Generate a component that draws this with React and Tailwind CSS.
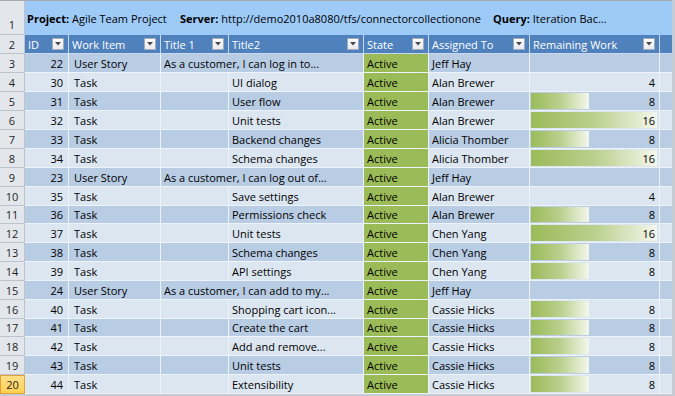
import React from "react";

const GRID =
  "grid grid-cols-[25px_44px_92px_68px_135px_65px_101px_130px_12px]";

const rows = [
  { n: 3, id: 22, type: "User Story", t1: "As a customer, I can log in to...", who: "Jeff Hay" },
  { n: 4, id: 30, type: "Task", t2: "UI dialog", who: "Alan Brewer", rw: 4 },
  { n: 5, id: 31, type: "Task", t2: "User flow", who: "Alan Brewer", rw: 8 },
  { n: 6, id: 32, type: "Task", t2: "Unit tests", who: "Alan Brewer", rw: 16 },
  { n: 7, id: 33, type: "Task", t2: "Backend changes", who: "Alicia Thomber", rw: 8 },
  { n: 8, id: 34, type: "Task", t2: "Schema changes", who: "Alicia Thomber", rw: 16 },
  { n: 9, id: 23, type: "User Story", t1: "As a customer, I can log out of...", who: "Jeff Hay" },
  { n: 10, id: 35, type: "Task", t2: "Save settings", who: "Alan Brewer", rw: 4 },
  { n: 11, id: 36, type: "Task", t2: "Permissions check", who: "Alan Brewer", rw: 8 },
  { n: 12, id: 37, type: "Task", t2: "Unit tests", who: "Chen Yang", rw: 16 },
  { n: 13, id: 38, type: "Task", t2: "Schema changes", who: "Chen Yang", rw: 8 },
  { n: 14, id: 39, type: "Task", t2: "API settings", who: "Chen Yang", rw: 8 },
  { n: 15, id: 24, type: "User Story", t1: "As a customer, I can add to my...", who: "Jeff Hay" },
  { n: 16, id: 40, type: "Task", t2: "Shopping cart icon...", who: "Cassie Hicks", rw: 8 },
  { n: 17, id: 41, type: "Task", t2: "Create the cart", who: "Cassie Hicks", rw: 8 },
  { n: 18, id: 42, type: "Task", t2: "Add and remove...", who: "Cassie Hicks", rw: 8 },
  { n: 19, id: 43, type: "Task", t2: "Unit tests", who: "Cassie Hicks", rw: 8 },
  { n: 20, id: 44, type: "Task", t2: "Extensibility", who: "Cassie Hicks", rw: 8 },
];

const barWidth = { 4: 0, 8: 58, 16: 126 };

function FilterBtn() {
  return (
    <div className="w-[12px] h-[12px] shrink-0 border border-[#a3acb7] bg-gradient-to-b from-white to-[#e6e9ee] flex items-center justify-center">
      <svg width="6" height="4" viewBox="0 0 6 4">
        <polygon points="0,0 6,0 3,3.5" fill="#4a4a4a" />
      </svg>
    </div>
  );
}

function HeadCell({ label }) {
  return (
    <div className="bg-[#4f81bd] text-white border-r border-b border-[#c9d8ec] flex items-center justify-between pl-[3px] pr-[4px] overflow-hidden whitespace-nowrap">
      <span>{label}</span>
      <FilterBtn />
    </div>
  );
}

function RowHead({ n, selected }) {
  if (selected) {
    return (
      <div className="border border-[#e2a13a] bg-gradient-to-b from-[#ffe189] to-[#ffd050] flex items-center justify-center text-[#1f1f1f]">
        {n}
      </div>
    );
  }
  return (
    <div className="bg-[#e3e6eb] border-r border-b border-[#bcc3cd] flex items-center justify-center text-[#1f1f1f]">
      {n}
    </div>
  );
}

function DataRow({ r, i }) {
  const band = i % 2 === 0 ? "bg-[#b8cce4]" : "bg-[#dce6f1]";
  const h = r.n === 11 || r.n === 17 ? "h-[18px]" : "h-[19px]";
  const cell = `${band} border-r border-b border-[#eef3f9] flex items-center overflow-hidden whitespace-nowrap`;
  const w = r.rw ? barWidth[r.rw] : 0;
  return (
    <div className={`${GRID} ${h}`}>
      <RowHead n={r.n} selected={r.n === 20} />
      <div className={`${cell} justify-end pr-[5px]`}>{r.id}</div>
      <div className={`${cell} pl-[5px]`}>{r.type}</div>
      {r.t1 ? (
        <div className={`${cell} col-span-2 pl-[3px]`}>{r.t1}</div>
      ) : (
        <>
          <div className={cell}></div>
          <div className={`${cell} pl-[3px]`}>{r.t2}</div>
        </>
      )}
      <div className="bg-[#9bbb59] border-r border-b border-[#eef3f9] flex items-center pl-[3px]">
        Active
      </div>
      <div className={`${cell} pl-[3px]`}>{r.who}</div>
      <div className={`${cell} relative justify-end pr-[4px]`}>
        {w > 0 && (
          <div
            className="absolute left-[1px] top-[1px] bottom-[1px] bg-gradient-to-r from-[#9bbb59] via-[#b9cf8c] to-[#f4f7ec]"
            style={{ width: w }}
          />
        )}
        <span className="relative">{r.rw ?? ""}</span>
      </div>
      <div className={`${band} border-b border-[#eef3f9]`}></div>
    </div>
  );
}

export default function App() {
  return (
    <div className="w-[675px] h-[396px] overflow-hidden bg-[#c6ccd4] text-[11px] leading-none text-black font-['Open_Sans','Noto_Sans',sans-serif]">
      <div className="w-[672px]">
        {/* Row 1 */}
        <div className={`${GRID} h-[35px] border-t border-[#a4abb5]`}>
          <div className="bg-[#e3e6eb] border-r border-b border-[#bcc3cd] flex items-end justify-center pb-[4px] text-[#1f1f1f]">
            1
          </div>
          <div className="col-span-8 bg-[#9dcaf7] flex items-center pl-[2px] whitespace-nowrap overflow-hidden">
            <span className="w-[153px] shrink-0">
              <b>Project:</b> Agile Team Project
            </span>
            <span className="w-[313px] shrink-0">
              <b>Server:</b> http://demo2010a8080/tfs/connectorcollectionone
            </span>
            <span>
              <b>Query:</b> Iteration Bac...
            </span>
          </div>
        </div>
        {/* Row 2 header */}
        <div className={`${GRID} h-[19px]`}>
          <RowHead n={2} />
          <HeadCell label="ID" />
          <HeadCell label="Work Item" />
          <HeadCell label="Title 1" />
          <HeadCell label="Title2" />
          <HeadCell label="State" />
          <HeadCell label="Assigned To" />
          <HeadCell label="Remaining Work" />
          <div className="bg-[#4f81bd] border-b border-[#c9d8ec]"></div>
        </div>
        {rows.map((r, i) => (
          <DataRow key={r.n} r={r} i={i} />
        ))}
      </div>
    </div>
  );
}
